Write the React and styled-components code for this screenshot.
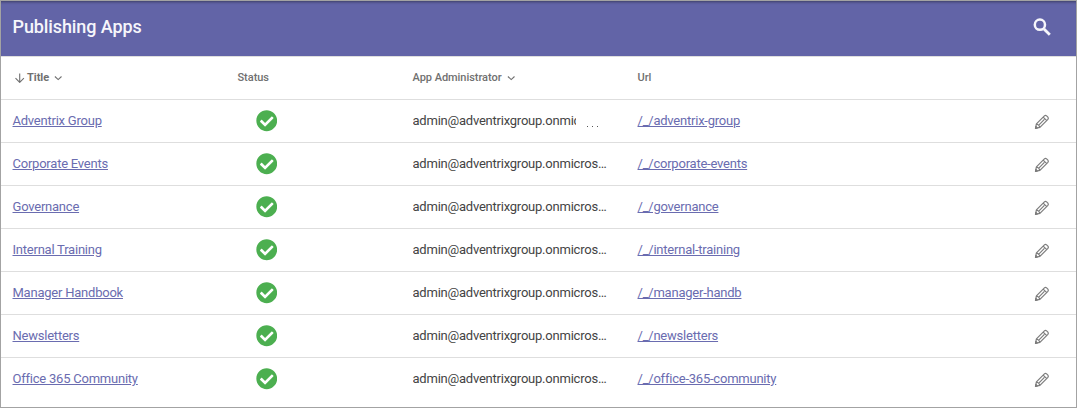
import React from 'react';
import styled, { createGlobalStyle } from 'styled-components';
import { FaCheckCircle } from 'react-icons/fa';

const GlobalStyle = createGlobalStyle`
  * { box-sizing: border-box; }
  body { margin: 0; background: #fff; font-family: Roboto, "Liberation Sans", sans-serif; }
`;

const Page = styled.main`
  height: 408px;
  border: 1px solid #a3a3a3;
  overflow: hidden;
  background: #fff;
`;

const TopBar = styled.header`
  height: 55px;
  padding: 0 22px 4px 11.5px;
  display: flex;
  align-items: center;
  justify-content: space-between;
  background: #6264a7;
  box-shadow: inset 0 3px 3px -2px rgba(0, 0, 0, 0.4);
  color: #f6f6fb;
`;

const Heading = styled.h1`
  margin: 0;
  font-size: 18px;
  font-weight: 500;
  line-height: 24px;
  letter-spacing: -0.1px;
`;

const IconButton = styled.button`
  display: flex;
  padding: 0;
  border: 0;
  background: none;
  color: inherit;
`;

const Row = styled.div`
  display: grid;
  grid-template-columns: 225px 175px 225px 1fr 16px;
  align-items: center;
  height: 43px;
  padding: 0 26px 0 11.5px;
  border-top: 1px solid #dedede;
  font-size: 13px;
  line-height: 20px;
  letter-spacing: -0.225px;
  color: #444;
`;

const HeadRow = styled(Row)`
  font-size: 11px;
  font-weight: 500;
  letter-spacing: -0.04px;
  color: #707070;
`;

const HeadCell = styled.div`
  display: flex;
  align-items: center;
  gap: 5px;
  font-weight: ${(p) => (p.$active ? 700 : 500)};
`;

const SortLabel = styled.span`
  display: flex;
  align-items: center;
  gap: 2.5px;
  padding-left: 2px;
`;

const Link = styled.a`
  color: #6a6cb0;
  text-decoration: underline;
`;

const StatusCell = styled.div`
  display: flex;
  padding-left: 18px;
  color: #4caf50;
`;

const AdminCell = styled.div`
  display: flex;
  width: 196px;
  white-space: nowrap;
`;

const AdminName = styled.span`
  width: ${(p) => (p.$clipped ? '163.5px' : '196px')};
  overflow: hidden;
  text-overflow: ${(p) => (p.$clipped ? 'clip' : 'ellipsis')};
`;

const More = styled.span`
  display: flex;
  align-items: flex-end;
  gap: 4px;
  padding: 0 0 4px 11px;
`;

const Dot = styled.i`
  width: 1px;
  height: 1px;
  background: #555;
`;

const EditButton = styled(IconButton)`
  padding-top: 2px;
  color: #7c7c7c;
`;

const SearchIcon = () => (
  <svg width="24" height="24" viewBox="0 0 24 24" fill="none" stroke="currentColor">
    <circle cx="9.9" cy="9.7" r="5.1" strokeWidth="2.5" />
    <path d="m14 14 5.8 5.8" strokeWidth="2.8" />
  </svg>
);

const Chevron = () => (
  <svg width="8" height="6" viewBox="0 0 8 6" fill="none" stroke="currentColor" strokeWidth="1.1">
    <path d="M.9 1.5 4.2 4.6 7.5 1.5" />
  </svg>
);

const ArrowDown = () => (
  <svg width="10" height="10" viewBox="0 0 10 10" fill="none" stroke="currentColor" strokeWidth="1.1">
    <path d="M4.7 .5v9M.5 5.2 4.7 9.4l4.2-4.2" />
  </svg>
);

const Pencil = () => (
  <svg width="16" height="16" viewBox="0 0 16 16" fill="none" stroke="currentColor" strokeWidth="1.2" strokeLinejoin="round">
    <path d="M1.5 14.3 2.4 9.9 10.4 1.9Q11.5 1 12.6 1.9L13.9 3.2Q14.8 4.3 13.9 5.4L5.9 13.4ZM2.4 9.9Q5.2 10.6 5.9 13.4M9.2 3.1 12.7 6.6M5 10.8 10.4 5.4" />
    <path d="M1.5 14.3 1.9 12.5 3.3 13.9Z" fill="currentColor" />
  </svg>
);

const apps = [
  ['Adventrix Group', 'adventrix-group'],
  ['Corporate Events', 'corporate-events'],
  ['Governance', 'governance'],
  ['Internal Training', 'internal-training'],
  ['Manager Handbook', 'manager-handb'],
  ['Newsletters', 'newsletters'],
  ['Office 365 Community', 'office-365-community'],
];

function AppRow({ title, slug, hovered }) {
  return (
    <Row>
      <div><Link>{title}</Link></div>
      <StatusCell><FaCheckCircle size={21.5} /></StatusCell>
      <AdminCell>
        <AdminName $clipped={hovered}>admin@adventrixgroup.onmicrosoft.com</AdminName>
        {hovered && <More><Dot /><Dot /><Dot /></More>}
      </AdminCell>
      <div><Link>{`/_/${slug}`}</Link></div>
      <EditButton aria-label="Edit"><Pencil /></EditButton>
    </Row>
  );
}

export default function App() {
  return (
    <Page>
      <GlobalStyle />
      <TopBar>
        <Heading>Publishing Apps</Heading>
        <IconButton aria-label="Search"><SearchIcon /></IconButton>
      </TopBar>
      <HeadRow>
        <HeadCell $active>
          <SortLabel><ArrowDown />Title</SortLabel>
          <Chevron />
        </HeadCell>
        <HeadCell>Status</HeadCell>
        <HeadCell>App Administrator <Chevron /></HeadCell>
        <HeadCell>Url</HeadCell>
      </HeadRow>
      {apps.map(([title, slug], i) => (
        <AppRow key={slug} title={title} slug={slug} hovered={i === 0} />
      ))}
    </Page>
  );
}
